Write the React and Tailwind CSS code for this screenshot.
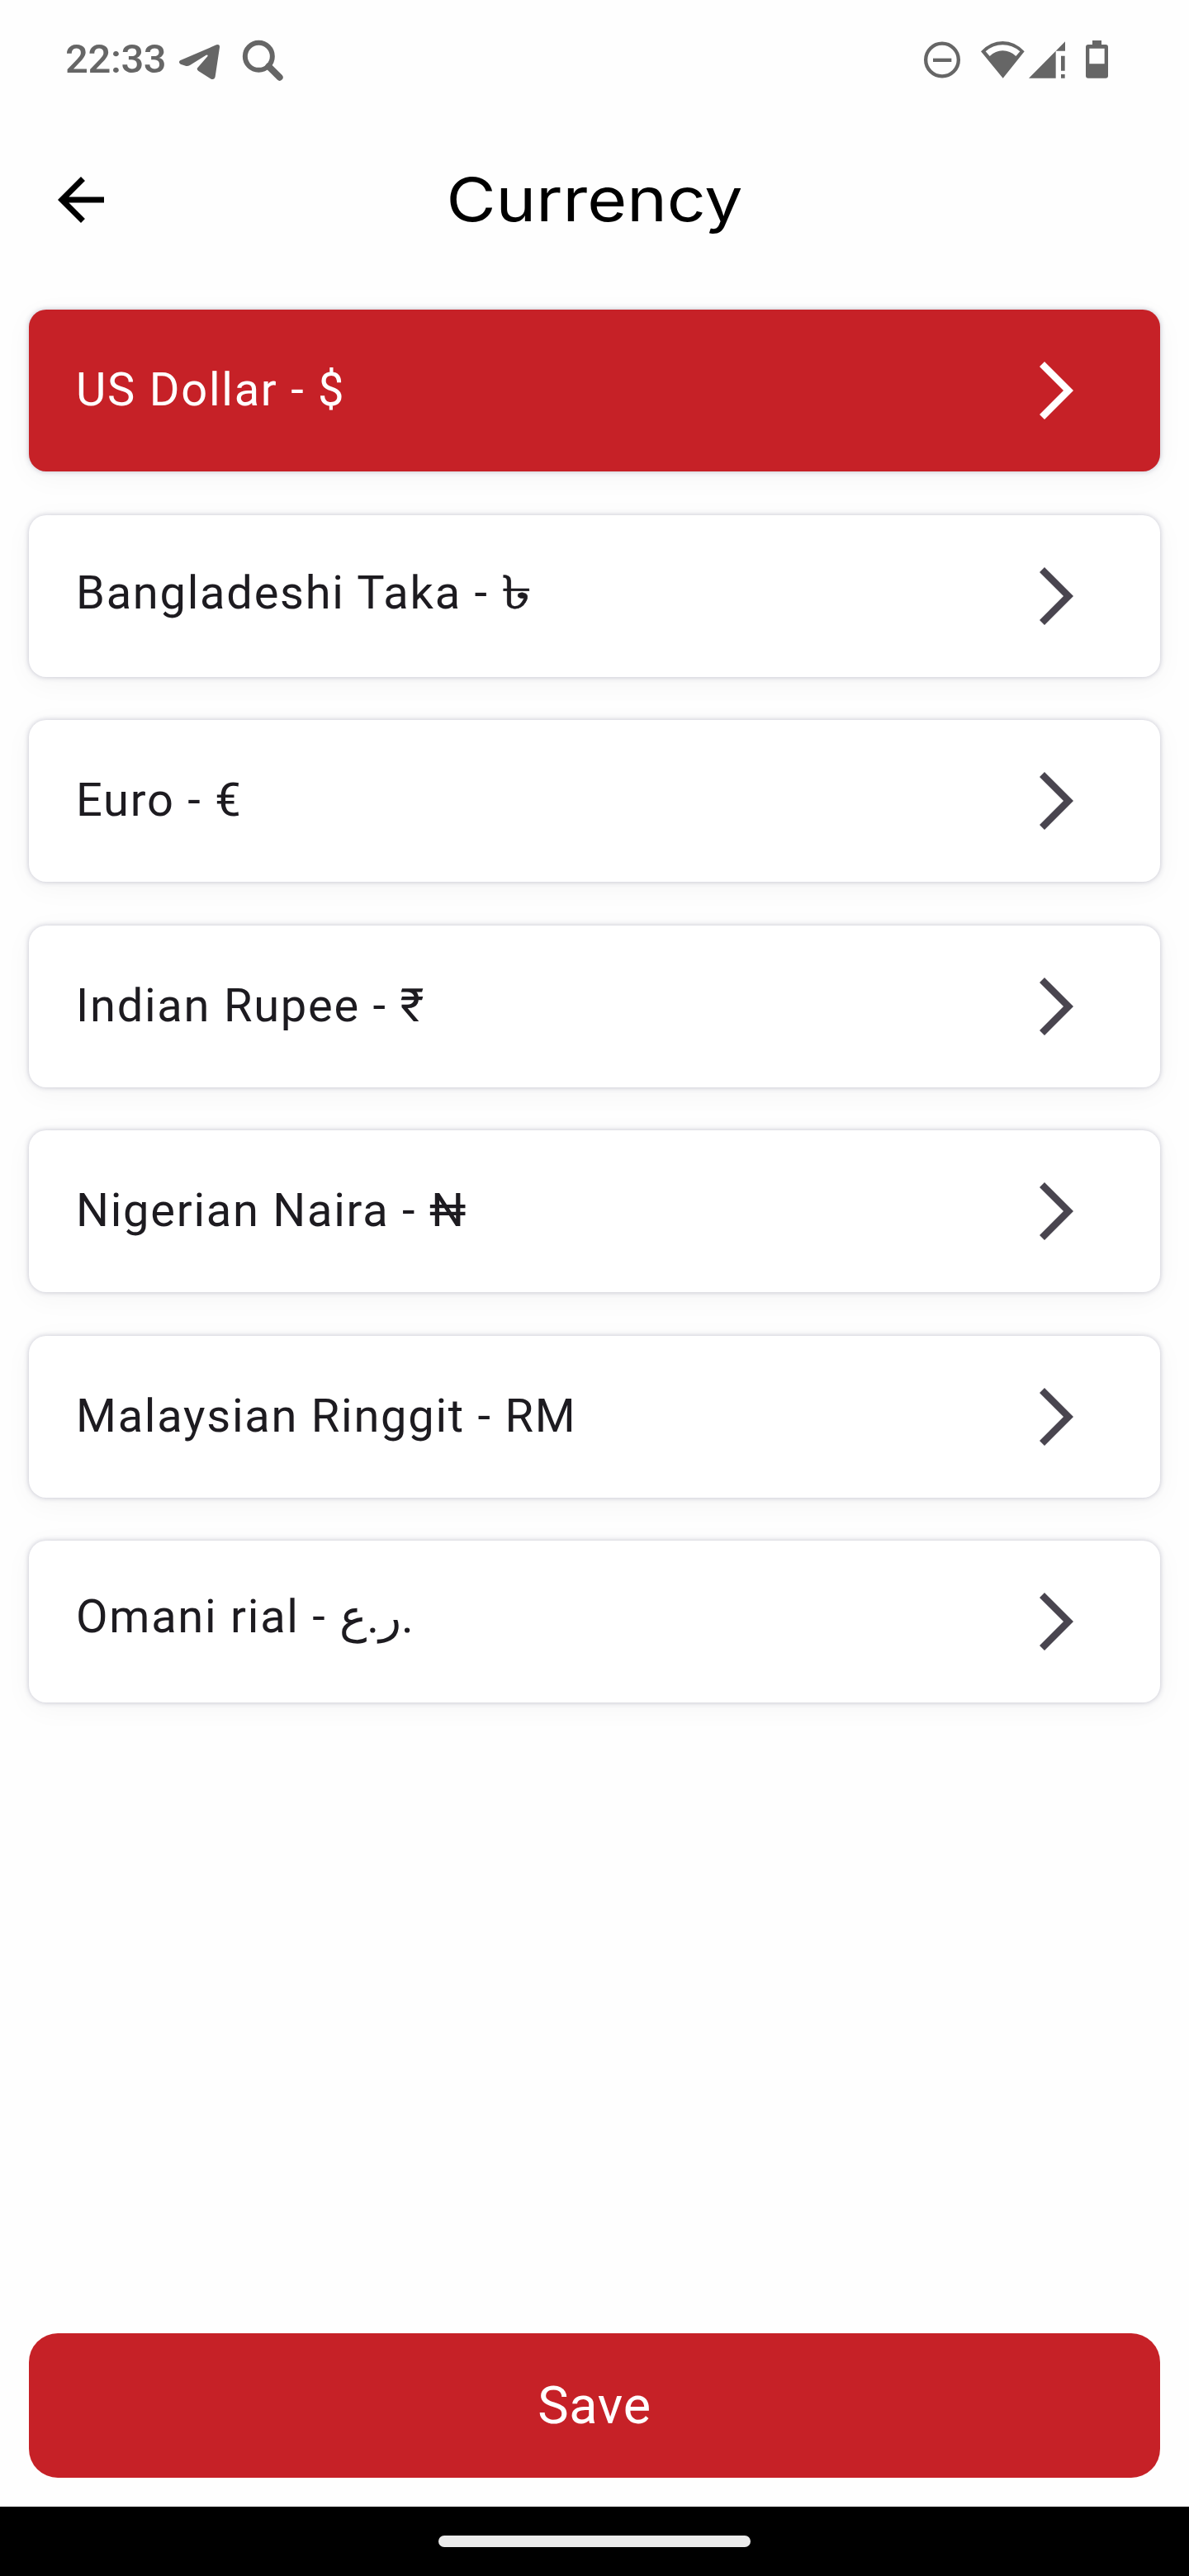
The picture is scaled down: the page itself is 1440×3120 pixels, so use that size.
const CURRENCIES = [
  { name: "US Dollar", symbol: "$", selected: true, pad: "pb-[3px]" },
  { name: "Bangladeshi Taka", symbol: "৳", pad: "pb-[7px]", symbolClass: "inline-block origin-left scale-x-[1.34] [-webkit-text-stroke:0.5px_currentColor]" },
  { name: "Euro", symbol: "€", pad: "pb-[2px]" },
  { name: "Indian Rupee", symbol: "₹", pad: "pb-[2px]" },
  { name: "Nigerian Naira", symbol: "₦", pad: "pb-[2px]" },
  { name: "Malaysian Ringgit", symbol: "RM", pad: "pb-[2px]" },
  { name: "Omani rial", symbol: "ر.ع.", pad: "pb-[12px]" },
];

function StatusBar() {
  return (
    <div className="flex h-[147px] items-start justify-between pr-[97px] pl-[79px] text-[#666666]">
      <div className="flex items-start">
        <span className="mt-[43px] w-[137px] text-[49px] leading-[58px] font-medium tracking-[-0.4px]">22:33</span>
        <svg className="mt-[52px] h-[46px] w-[51px]" viewBox="468 66 153 138" fill="currentColor">
          <path d="M474 130 L606 73 Q619 69 618 82 L602 188 Q599 201 587 197 L541 168 Q533 162 538 156 L574 115 Q577 108 569 110 L510 147 Q502 151 494 149 L476 143 Q467 137 474 130Z" />
        </svg>
        <svg className="mt-[48px] ml-[26px] size-[51px]" viewBox="699 54 153 153" fill="none" stroke="currentColor">
          <circle cx="760" cy="115" r="49.5" strokeWidth="18" />
          <path d="M796 151 L836 191" strokeWidth="24" strokeLinecap="round" />
        </svg>
      </div>
      <div className="flex items-start">
        <svg className="mt-[49px] size-[46px]" viewBox="54 57 138 138" fill="none" stroke="currentColor" strokeWidth="13">
          <circle cx="123" cy="127.5" r="59.5" />
          <path d="M90 128.5 H157" />
        </svg>
        <svg className="mt-[49px] ml-[23px] h-[46px] w-[55px]" viewBox="261 57 165 138" fill="currentColor" fillRule="evenodd">
          <path d="M344 194 L264 97 Q298 60 343 60 Q388 60 422 97Z M281 97 L296 114 Q317 94 343 94 Q370 94 391 114 L406 97 Q378 73 343 73 Q308 73 281 97Z" />
        </svg>
        <svg className="mt-[49px] ml-[3px] size-[46px]" viewBox="435 57 138 138" fill="currentColor">
          <path d="M438 194 L570 61 V95 H536 V194Z M555 113 H569 V167 H555Z M555 180 H569 V194 H555Z" />
        </svg>
        <svg className="mt-[48px] ml-[23px] h-[47px] w-[29px]" viewBox="642 54 87 141" fill="currentColor" fillRule="evenodd">
          <path d="M669 57 H702 V72 H717 Q726 72 726 81 V185 Q726 194 717 194 H654 Q645 194 645 185 V81 Q645 72 654 72 H669Z M658 86 V142 H713 V86Z" />
        </svg>
      </div>
    </div>
  );
}

function Header() {
  return (
    <header className="grid h-[190px] grid-cols-[84px_1fr_84px] items-center px-[56px]">
      <button aria-label="Back">
        <svg className="size-[84px]" viewBox="0 0 24 24" fill="black">
          <path d="M20 11H7.83l5.59-5.59L12 4l-8 8 8 8 1.41-1.41L7.83 13H20v-2z" />
        </svg>
      </button>
      <h1 className="scale-x-[1.12] text-center font-['Inter',sans-serif] text-[73.5px] leading-[96px] text-black">Currency</h1>
    </header>
  );
}

function CurrencyCard({ name, symbol, selected, pad, symbolClass }) {
  return (
    <li
      className={`flex h-[196px] items-center justify-between rounded-[21px] pr-[105px] pl-[57px] shadow-[0_0_6px_rgba(50,50,93,0.28),0_7px_35px_rgba(0,0,0,0.04)] ${
        selected ? "bg-[#c62127] text-white" : "bg-white text-[#1d1b20]"
      }`}
    >
      <span className={`text-[56px] leading-[84px] tracking-[1.75px] whitespace-nowrap ${pad}`}>
        {name} - <span className={symbolClass}>{symbol}</span>
      </span>
      <svg className={`h-[70px] w-[41px] ${selected ? "text-white" : "text-[#49454f]"}`} viewBox="0 0 41 70" fill="currentColor">
        <path d="M6 0 L41 35 L6 70 L0 64 L29 35 L0 6Z" />
      </svg>
    </li>
  );
}

export default function App() {
  return (
    <div className="flex h-[3120px] w-[1440px] flex-col overflow-hidden bg-[#fefefe] font-['Roboto','Noto_Sans',sans-serif]">
      <StatusBar />
      <Header />
      <ul className="flex flex-1 flex-col gap-[52.5px] px-[35px] pt-[38px]">
        {CURRENCIES.map((c) => (
          <CurrencyCard key={c.name} {...c} />
        ))}
      </ul>
      <div className="px-[35px] pb-[35px]">
        <button className="flex h-[175px] w-full items-center justify-center rounded-[35px] bg-[#c62127] pt-[1px] text-[63px] tracking-[0.75px] text-white">
          Save
        </button>
      </div>
      <div className="flex h-[84px] justify-center bg-black pt-[35px]">
        <div className="h-[14px] w-[378px] rounded-full bg-[#ebebeb]" />
      </div>
    </div>
  );
}
